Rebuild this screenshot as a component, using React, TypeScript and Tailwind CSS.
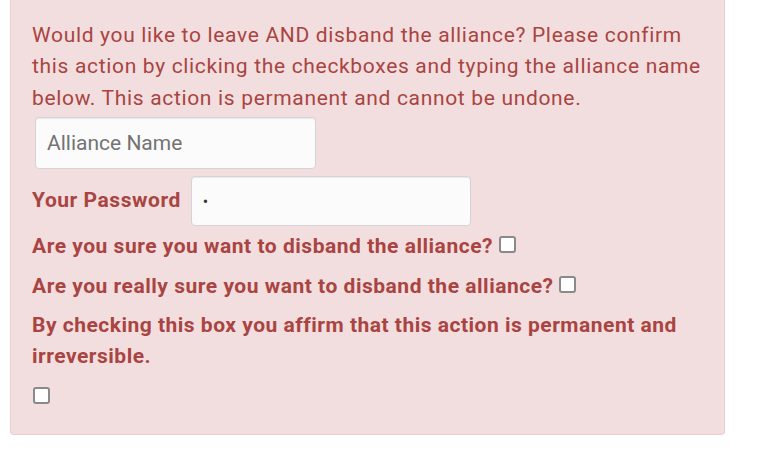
import React from "react";

const Box = () => (
  <span className="inline-block w-[17px] h-[17px] border-2 border-[#8a8a8a] rounded-[3px] bg-white align-baseline" />
);

export default function App() {
  return (
    <div
      className="w-[766px] h-[457px] bg-white overflow-hidden"
      style={{ fontFamily: "Roboto, 'Liberation Sans', sans-serif" }}
    >
      <div className="ml-[10px] w-[715px] bg-[#f2dede] border border-t-0 border-[#ebccd1] rounded-b-[4px] pl-[21px] pr-[21px] pt-[20px] pb-[30px] text-[#a94442] text-[21px] leading-[31.4px] tracking-[0.67px]">
        <p>
          Would you like to leave AND disband the alliance? Please confirm this action by clicking the
          checkboxes and typing the alliance name below. This action is permanent and cannot be undone.
        </p>
        <input
          type="text"
          placeholder="Alliance Name"
          className="block mt-[3px] ml-[3px] w-[281px] h-[52px] px-[11px] bg-[#fbfbfb] border border-[#d4d4d4] rounded-[4px] shadow-[inset_0_1px_1px_rgba(0,0,0,0.075)] text-[21px] tracking-normal text-[#555] placeholder:text-[#737373] outline-none"
        />
        <div className="flex items-start mt-[7px]">
          <label className="font-bold tracking-[0.55px] mt-[9px] mr-[10px]">Your Password</label>
          <input
            type="password"
            defaultValue="a"
            readOnly
            className="w-[280px] h-[50px] px-[11px] bg-[#fbfbfb] border border-[#d4d4d4] rounded-[4px] shadow-[inset_0_1px_1px_rgba(0,0,0,0.075)] text-[16px] tracking-normal text-[#333] outline-none"
          />
        </div>
        <label className="block font-bold tracking-[0.52px] mt-[5px] mb-[8px]">
          Are you sure you want to disband the alliance? <Box />
        </label>
        <label className="block font-bold tracking-[0.52px] mb-[8px]">
          Are you really sure you want to disband the alliance? <Box />
        </label>
        <label className="block font-bold tracking-[0.5px] mb-[8px]">
          By checking this box you affirm that this action is permanent and irreversible.
        </label>
        <div className="mt-[14px] ml-[1px] h-[17px] flex">
          <Box />
        </div>
      </div>
    </div>
  );
}
